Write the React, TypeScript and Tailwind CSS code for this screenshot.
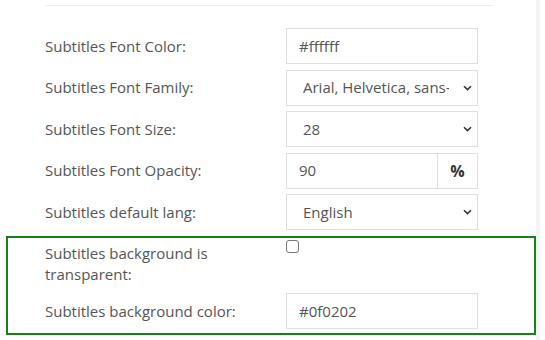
import { ReactNode } from 'react'

function Chevron() {
  return (
    <svg width="9" height="6" viewBox="0 0 9 6" className="shrink-0">
      <path d="M1 1.2 L4.5 4.6 L8 1.2" fill="none" stroke="#333" strokeWidth="1.6" />
    </svg>
  )
}

function Row({ label, children }: { label: string; children: ReactNode }) {
  return (
    <div className="flex items-center h-[36px] pl-[45px]">
      <div className="w-[241px] text-[15px] text-[#555]">{label}</div>
      {children}
    </div>
  )
}

function TextBox({ value }: { value: string }) {
  return (
    <div className="w-[192px] h-[36px] border border-[#dfdfdf] flex items-center pl-[12px] text-[15px] text-[#555]">
      {value}
    </div>
  )
}

function SelectBox({ value }: { value: string }) {
  return (
    <div className="w-[192px] h-[36px] border border-[#dfdfdf] flex items-center pl-[16px] pr-[5px] text-[15px] text-[#555]">
      <span className="w-[146px] overflow-hidden whitespace-nowrap">{value}</span>
      <span className="flex-1" />
      <Chevron />
    </div>
  )
}

export default function App() {
  return (
    <div className="w-[545px] h-[340px] bg-white overflow-hidden flex font-['Open_Sans',sans-serif]">
      <div className="w-[536px] shrink-0 pt-[5px]">
        <div className="ml-[45px] w-[448px] h-px bg-[#efefef]" />

        {/* Form rows */}
        <div className="mt-[22px] flex flex-col gap-[5.5px]">
          <Row label="Subtitles Font Color:">
            <TextBox value="#ffffff" />
          </Row>
          <Row label="Subtitles Font Family:">
            <SelectBox value="Arial, Helvetica, sans-serif" />
          </Row>
          <Row label="Subtitles Font Size:">
            <SelectBox value="28" />
          </Row>
          <Row label="Subtitles Font Opacity:">
            <div className="w-[192px] h-[36px] border border-[#dfdfdf] flex text-[15px] text-[#555]">
              <div className="flex-1 flex items-center pl-[12px]">90</div>
              <div className="w-[40px] border-l border-[#dfdfdf] flex items-center justify-center font-bold text-[#333] text-[16px]">
                %
              </div>
            </div>
          </Row>
          <Row label="Subtitles default lang:">
            <SelectBox value="English" />
          </Row>
        </div>

        {/* Highlighted background settings */}
        <div className="mt-[6px] ml-[6px] w-[530px] border-2 border-[#17801a] pl-[37px] pb-[4px]">
          <div className="flex items-start h-[47px]">
            <div className="w-[241px] pt-[5px] pr-[28px] text-[15px] leading-[21px] text-[#555]">
              Subtitles background is transparent:
            </div>
            <div className="mt-[2px] w-[13px] h-[13px] border border-[#777] rounded-[3px] bg-white" />
          </div>
          <div className="mt-[8px] flex items-center h-[36px]">
            <div className="w-[241px] text-[15px] text-[#555]">Subtitles background color:</div>
            <TextBox value="#0f0202" />
          </div>
        </div>
      </div>
      <div className="w-[4px] h-full bg-[#f4f4f4]" />
    </div>
  )
}
